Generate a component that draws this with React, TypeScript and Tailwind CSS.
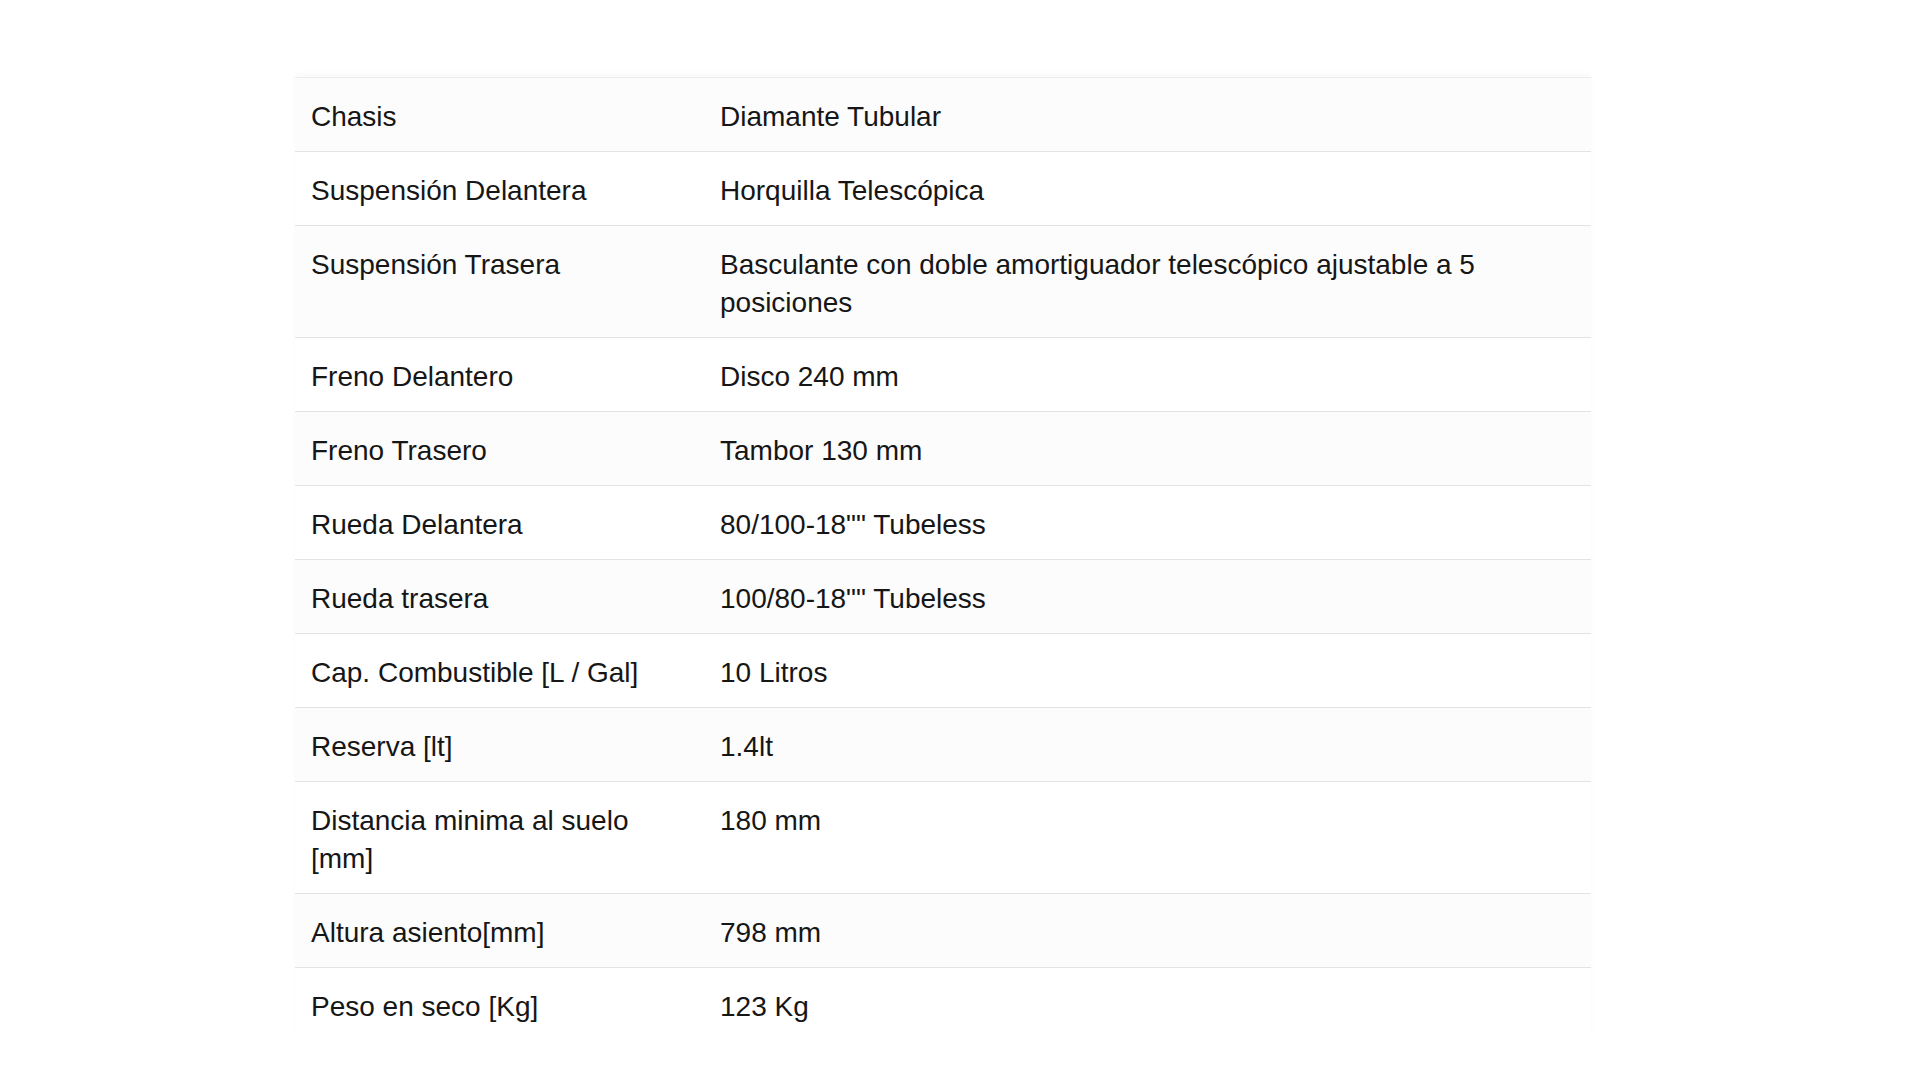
import React from "react";

interface Spec {
  label: string;
  value: string;
}

const specs: Spec[] = [
  { label: "Chasis", value: "Diamante Tubular" },
  { label: "Suspensión Delantera", value: "Horquilla Telescópica" },
  {
    label: "Suspensión Trasera",
    value: "Basculante con doble amortiguador telescópico ajustable a 5 posiciones",
  },
  { label: "Freno Delantero", value: "Disco 240 mm" },
  { label: "Freno Trasero", value: "Tambor 130 mm" },
  { label: "Rueda Delantera", value: '80/100-18"" Tubeless' },
  { label: "Rueda trasera", value: '100/80-18"" Tubeless' },
  { label: "Cap. Combustible [L / Gal]", value: "10 Litros" },
  { label: "Reserva [lt]", value: "1.4lt" },
  { label: "Distancia minima al suelo [mm]", value: "180 mm" },
  { label: "Altura asiento[mm]", value: "798 mm" },
  { label: "Peso en seco [Kg]", value: "123 Kg" },
];

const App: React.FC = () => {
  return (
    <div
      className="min-h-screen bg-white pt-[77px] text-[#161616]"
      style={{ fontFamily: '"Liberation Sans", Arial, sans-serif' }}
    >
      <table className="ml-[295px] w-[1296px] table-fixed border-collapse shadow-[0_-4px_5px_rgba(0,0,0,0.025)]">
        <colgroup>
          <col className="w-[409px]" />
          <col />
        </colgroup>
        <tbody>
          {specs.map((spec, index) => (
            <tr
              key={spec.label}
              className={`border-t ${
                index === 0 ? "border-[#ececec]" : "border-[#e3e3e3]"
              } ${index % 2 === 0 ? "bg-[#fcfcfc]" : "bg-white"}`}
            >
              <td className="px-4 pt-[20px] pb-[15px] align-top text-[28px] leading-[38px]">
                {spec.label}
              </td>
              <td className="px-4 pt-[20px] pb-[15px] align-top text-[28px] leading-[38px]">
                {spec.value}
              </td>
            </tr>
          ))}
        </tbody>
      </table>
    </div>
  );
};

export default App;
